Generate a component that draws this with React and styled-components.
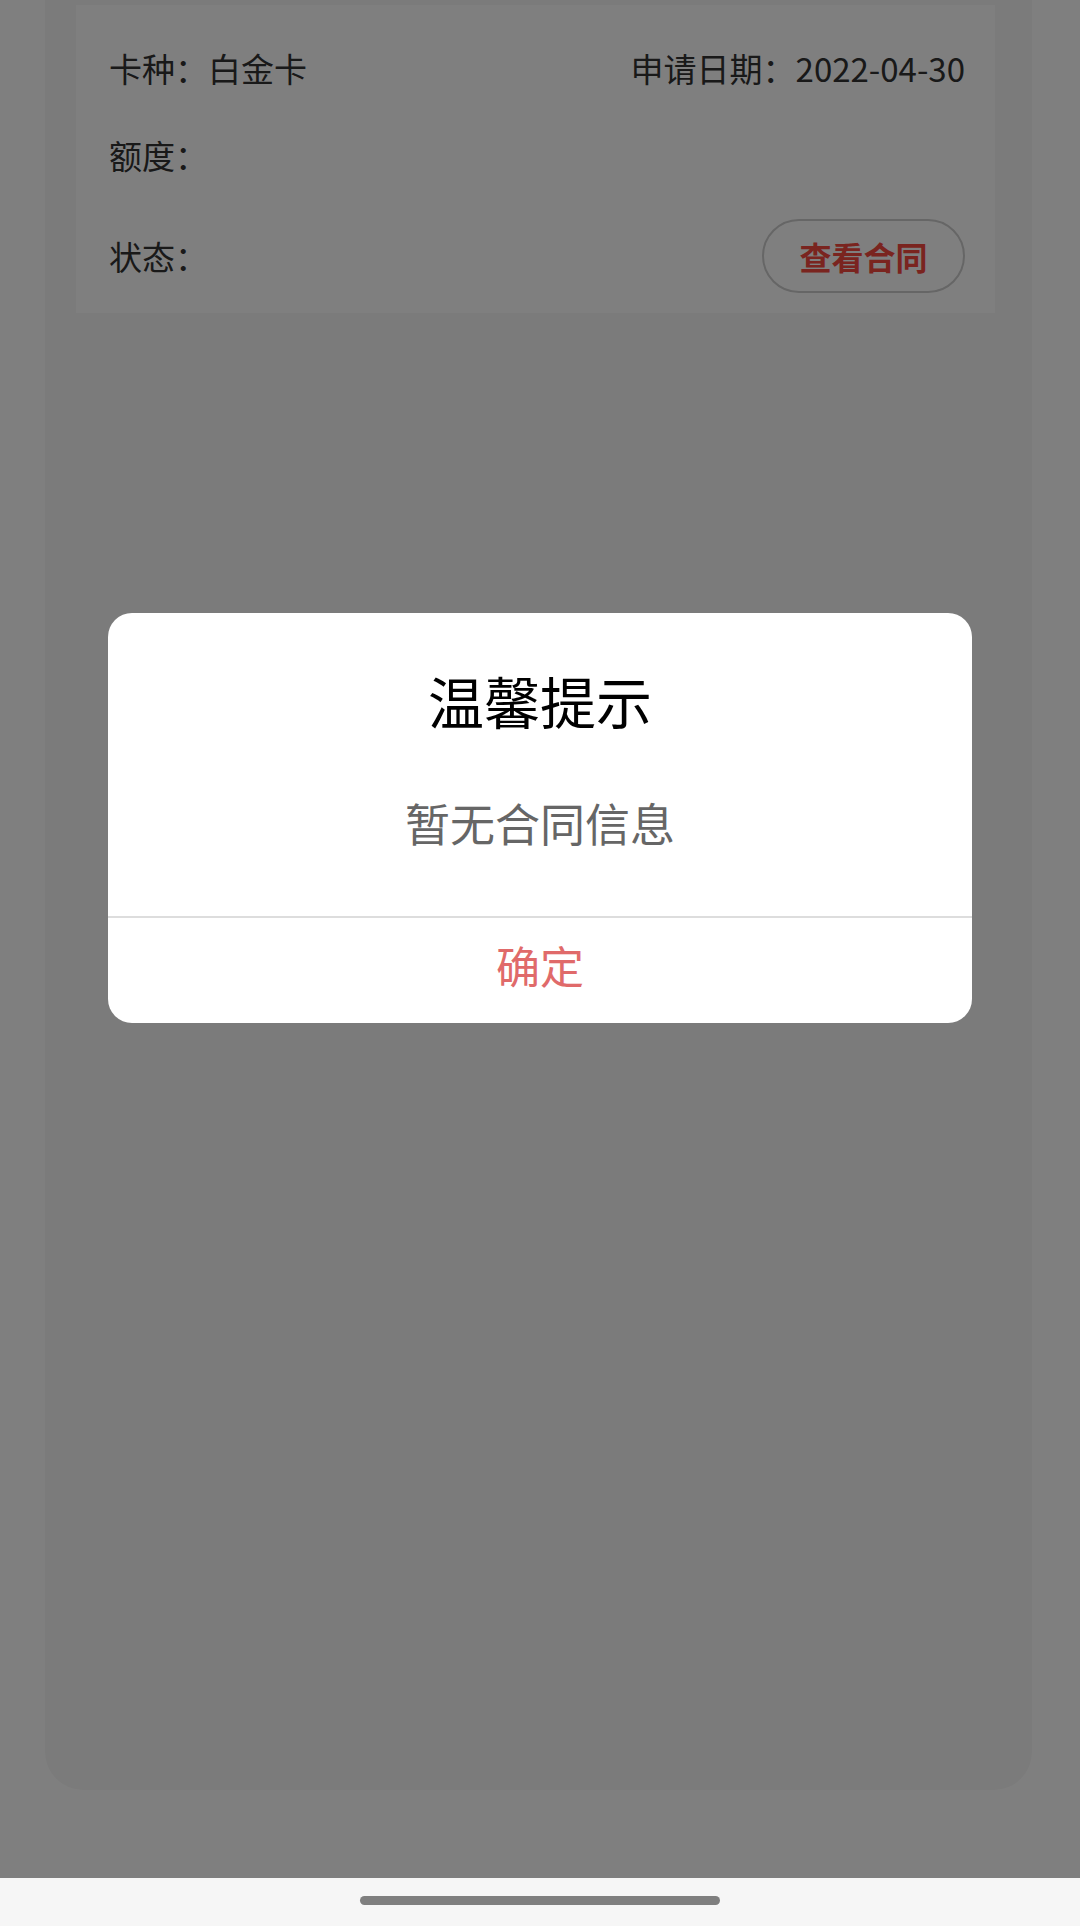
import React from 'react';
import styled, { createGlobalStyle } from 'styled-components';

const GlobalStyle = createGlobalStyle`
  * { box-sizing: border-box; }
  html, body {
    margin: 0;
    padding: 0;
    background: #ffffff;
    font-family: "Noto Sans CJK SC", "Noto Sans", sans-serif;
  }
`;

const Screen = styled.div`
  width: 1080px;
  height: 1926px;
  display: flex;
  flex-direction: column;
  overflow: hidden;
`;

const Viewport = styled.div`
  position: relative;
  flex: 1;
  background: #ffffff;
  padding: 0 48px 0 45px;
`;

const Panel = styled.div`
  height: 1790px;
  background: #f7f7f7;
  border-radius: 0 0 38px 38px;
  padding: 5px 37px 0 31px;
`;

const InfoCard = styled.div`
  background: #ffffff;
  height: 308px;
  padding: 0 30px 0 33px;
  display: flex;
  flex-direction: column;
`;

const Row = styled.div`
  flex: none;
  height: ${(p) => p.$h}px;
  display: flex;
  align-items: center;
  justify-content: space-between;
  font-size: 33px;
  color: #333333;
`;

const Label = styled.span`
  white-space: nowrap;
`;

const ContractButton = styled.button`
  width: 203px;
  height: 74px;
  border: 2px solid #cccccc;
  border-radius: 37px;
  background: transparent;
  color: #f5483f;
  font-family: inherit;
  font-size: 32px;
  font-weight: 700;
  padding: 0;
  display: flex;
  align-items: center;
  justify-content: center;
`;

const Mask = styled.div`
  position: absolute;
  inset: 0;
  background: rgba(0, 0, 0, 0.5);
  display: flex;
  flex-direction: column;
  align-items: center;
  padding-top: 613px;
`;

const Dialog = styled.div`
  width: 864px;
  background: #ffffff;
  border-radius: 24px;
  overflow: hidden;
  display: flex;
  flex-direction: column;
  align-items: center;
`;

const DialogTitle = styled.h2`
  margin: 55px 0 0;
  font-size: 56px;
  line-height: 64px;
  font-weight: 400;
  color: #000000;
`;

const DialogMessage = styled.p`
  margin: 61px 0 0;
  font-size: 45px;
  line-height: 60px;
  color: #666666;
`;

const DialogFooter = styled.div`
  margin-top: 63px;
  width: 100%;
  height: 107px;
  padding-bottom: 12px;
  border-top: 2px solid #dddddd;
  display: flex;
  align-items: center;
  justify-content: center;
  font-size: 44px;
  color: #e06a6a;
`;

const NavBar = styled.div`
  height: 48px;
  background: #f6f6f6;
  display: flex;
  justify-content: center;
  padding-top: 18px;
`;

const HomeIndicator = styled.div`
  width: 360px;
  height: 9px;
  border-radius: 5px;
  background: #7f7f7f;
`;

export default function App() {
  return (
    <>
      <GlobalStyle />
      <Screen>
        <Viewport>
          <Panel>
            <InfoCard>
              <Row $h={126}>
                <Label>卡种：白金卡</Label>
                <Label>申请日期：2022-04-30</Label>
              </Row>
              <Row $h={48}>
                <Label>额度：</Label>
              </Row>
              <Row $h={154}>
                <Label>状态：</Label>
                <ContractButton>查看合同</ContractButton>
              </Row>
            </InfoCard>
          </Panel>
          <Mask>
            <Dialog>
              <DialogTitle>温馨提示</DialogTitle>
              <DialogMessage>暂无合同信息</DialogMessage>
              <DialogFooter>确定</DialogFooter>
            </Dialog>
          </Mask>
        </Viewport>
        <NavBar>
          <HomeIndicator />
        </NavBar>
      </Screen>
    </>
  );
}
